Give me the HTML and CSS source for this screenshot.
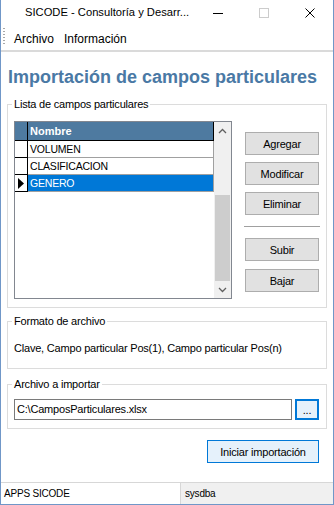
FILE: index.html
```html
<!DOCTYPE html>
<html lang="es">
<head>
<meta charset="utf-8">
<title>SICODE</title>
<link rel="stylesheet" href="styles.css">
</head>
<body>
<div class="window">
  <div class="titlebar">
    <div class="title">SICODE - Consultoría y Desarr...</div>
    <div class="caption">
      <div class="cbtn"><svg width="10" height="10" viewBox="0 0 10 10"><path d="M0 5.5H10" stroke="#000" stroke-width="1"/></svg></div>
      <div class="cbtn"><svg width="10" height="10" viewBox="0 0 10 10"><rect x="0.5" y="0.5" width="9" height="9" fill="none" stroke="#cccccc" stroke-width="1"/></svg></div>
      <div class="cbtn"><svg width="10" height="10" viewBox="0 0 10 10"><path d="M0.5 0.5L9.5 9.5M9.5 0.5L0.5 9.5" stroke="#000" stroke-width="1"/></svg></div>
    </div>
  </div>
  <div class="menubar">
    <span class="grip"></span>
    <span class="menuitem">Archivo</span>
    <span class="menuitem">Información</span>
  </div>
  <div class="content">
    <h1 class="heading">Importación de campos particulares</h1>

    <fieldset class="group group-list">
      <legend>Lista de campos particulares</legend>
      <div class="list-row">
        <div class="grid">
          <div class="grid-body">
            <div class="grow head"><div class="rh"></div><div class="cell">Nombre</div></div>
            <div class="grow"><div class="rh"></div><div class="cell">VOLUMEN</div></div>
            <div class="grow"><div class="rh"></div><div class="cell">CLASIFICACION</div></div>
            <div class="grow selected"><div class="rh"><svg width="6" height="11" viewBox="0 0 6 11"><path d="M0 0L6 5.5L0 11Z" fill="#000"/></svg></div><div class="cell">GENERO</div></div>
          </div>
          <div class="vscroll">
            <div class="sbtn"><svg width="9" height="6" viewBox="0 0 9 6"><path d="M1 5L4.5 1.5L8 5" fill="none" stroke="#606060" stroke-width="1.3"/></svg></div>
            <div class="track"><div class="thumb"></div></div>
            <div class="sbtn"><svg width="9" height="6" viewBox="0 0 9 6"><path d="M1 1L4.5 4.5L8 1" fill="none" stroke="#606060" stroke-width="1.3"/></svg></div>
          </div>
        </div>
        <div class="side-buttons">
          <button class="btn">Agregar</button>
          <button class="btn">Modificar</button>
          <button class="btn">Eliminar</button>
          <div class="sep"></div>
          <button class="btn">Subir</button>
          <button class="btn btn-last">Bajar</button>
        </div>
      </div>
    </fieldset>

    <fieldset class="group group-format">
      <legend>Formato de archivo</legend>
      <div class="format-text">Clave, Campo particular Pos(1), Campo particular Pos(n)</div>
    </fieldset>

    <fieldset class="group group-file">
      <legend>Archivo a importar</legend>
      <div class="file-row">
        <div class="textbox">C:\CamposParticulares.xlsx</div>
        <button class="btn btn-focus btn-browse">...</button>
      </div>
    </fieldset>

    <div class="actions">
      <button class="btn btn-default btn-import">Iniciar importación</button>
    </div>
  </div>
  <div class="statusbar">
    <div class="panel panel-app">APPS SICODE</div>
    <div class="panel panel-user">sysdba</div>
  </div>
</div>
</body>
</html>
```
FILE: styles.css
```css
* { box-sizing: border-box; }
html, body { margin: 0; padding: 0; }
body {
  width: 334px;
  height: 505px;
  overflow: hidden;
  font-family: "Liberation Sans", Arial, sans-serif;
  font-size: 11px;
  color: #000;
  background: #fff;
}
.window {
  height: 505px;
  display: flex;
  flex-direction: column;
  border: 1px solid #7097c8;
  border-top: none;
  background: #fff;
}
.titlebar {
  height: 28px;
  display: flex;
  align-items: flex-start;
  flex-shrink: 0;
}
.title {
  padding-left: 24px;
  line-height: 25px;
  font-size: 11.2px;
  flex: 1;
  white-space: nowrap;
}
.caption { display: flex; }
.cbtn {
  width: 46px;
  height: 26px;
  display: flex;
  align-items: center;
  justify-content: center;
}
.cbtn svg { display: block; }
.menubar {
  height: 24px;
  flex-shrink: 0;
  display: flex;
  align-items: center;
  padding-left: 2px;
  border-bottom: 2px solid #dadada;
  font-size: 12px;
  line-height: 22px;
}
.grip {
  width: 2px;
  height: 18px;
  margin-top: -4px;
  margin-right: 4px;
  background: repeating-linear-gradient(to bottom, #a8a8a8 0 1px, transparent 1px 3px);
}
.menuitem { padding: 0 5px; }
.content {
  flex: 1;
  display: flex;
  flex-direction: column;
  padding: 0 6px;
}
.heading {
  margin: 14px 0 0 1px;
  font-size: 18px;
  line-height: 22px;
  font-weight: bold;
  color: #4a79a5;
}
.group {
  margin: 0;
  border: 1px solid #dcdcdc;
  min-width: 0;
}
.group legend {
  padding: 0 2px;
  margin-left: -2px;
  font-size: 11px;
  line-height: 14px;
  letter-spacing: -0.2px;
}
.group-list { margin-top: 9px; padding: 10px 7px 8px 6px; }
.list-row { display: flex; align-items: flex-start; }
.grid {
  width: 218px;
  height: 178px;
  border: 1px solid #828790;
  display: flex;
  background: #fff;
}
.grid-body { flex: 1; display: flex; flex-direction: column; }
.grow { display: flex; height: 17px; }
.grow .rh {
  width: 13px;
  border-right: 1px solid #000;
  border-bottom: 1px solid #000;
  display: flex;
  align-items: center;
  justify-content: center;
}
.grow .cell {
  flex: 1;
  border-right: 1px solid #a0a0a0;
  border-bottom: 1px solid #a0a0a0;
  padding-left: 2px;
  font-size: 10.5px;
  letter-spacing: -0.2px;
  line-height: 16px;
  white-space: nowrap;
}
.grow.head { height: 19px; background: #4e7aa0; }
.grow.head .cell {
  color: #fff;
  font-weight: bold;
  font-size: 11px;
  letter-spacing: 0;
  line-height: 18px;
  border-right-color: #000;
  border-bottom-color: #000;
}
.grow.selected .cell { background: #0078d7; color: #fff; }
.vscroll {
  width: 17px;
  background: #f0f0f0;
  display: flex;
  flex-direction: column;
}
.sbtn {
  height: 17px;
  display: flex;
  align-items: center;
  justify-content: center;
  flex-shrink: 0;
}
.track { flex: 1; padding: 56px 1px 0; }
.thumb { height: 86px; background: #cdcdcd; }
.side-buttons {
  margin-left: 13px;
  margin-top: 11px;
  width: 74px;
  display: flex;
  flex-direction: column;
}
.btn {
  font-family: "Liberation Sans", Arial, sans-serif;
  font-size: 11px;
  letter-spacing: -0.2px;
  color: #000;
  background: #e1e1e1;
  border: 1px solid #adadad;
  height: 23px;
  padding: 0;
  margin: 0 0 7px;
}
.side-buttons .btn:nth-child(5) { margin-bottom: 8px; }
.btn-last { margin-bottom: 0; }
.sep {
  height: 1px;
  background: #a0a0a0;
  margin: 4px -1px 11px;
}
.group-format { margin-top: 6px; padding: 13px 6px 13px 6px; }
.format-text { line-height: 14px; letter-spacing: -0.2px; white-space: nowrap; }
.group-file { margin-top: 8px; padding: 8px 7px 8px 6px; }
.file-row { display: flex; gap: 3px; }
.textbox {
  flex: 1;
  height: 21px;
  border: 1px solid #7a7a7a;
  padding-left: 2px;
  line-height: 19px;
  letter-spacing: -0.2px;
  white-space: nowrap;
}
.btn-focus { background: #e5f1fb; border: 2px solid #0078d7; }
.btn-browse { width: 24px; height: 21px; margin: 0; line-height: 18px; }
.actions { display: flex; justify-content: flex-end; padding-right: 8px; margin-top: 11px; }
.btn-default { background: #e5f1fb; border: 1px solid #0078d7; }
.btn-import { width: 112px; margin: 0; }
.statusbar {
  height: 22px;
  flex-shrink: 0;
  display: flex;
  border-top: 1px solid #d7d7d7;
  font-size: 10px;
  letter-spacing: -0.2px;
}
.panel { padding-top: 4px; line-height: 14px; white-space: nowrap; }
.panel-app { width: 180px; padding-left: 3px; background: #fff; border-right: 1px solid #d7d7d7; }
.panel-user { flex: 1; padding-left: 4px; background: #f0f0f0; }
```
